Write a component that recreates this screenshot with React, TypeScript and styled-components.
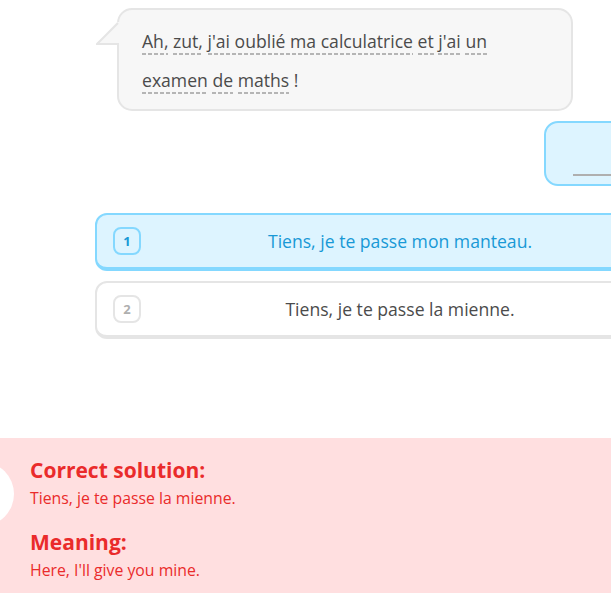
import React from "react";
import styled, { createGlobalStyle } from "styled-components";

const GlobalStyle = createGlobalStyle`
  html, body {
    margin: 0;
    padding: 0;
    background: #ffffff;
    overflow: hidden;
  }
  body {
    font-family: "Open Sans", "Liberation Sans", sans-serif;
  }
`;

type Choice = { id: number; text: string; selected?: boolean };

const prompt: { text: string; hint: boolean }[][] = [
  [
    { text: "Ah,", hint: true },
    { text: "zut,", hint: true },
    { text: "j'ai oublié ma calculatrice", hint: true },
    { text: "et", hint: true },
    { text: "j'ai", hint: true },
    { text: "un", hint: true },
  ],
  [
    { text: "examen", hint: true },
    { text: "de", hint: true },
    { text: "maths", hint: true },
    { text: "!", hint: false },
  ],
];

const choices: Choice[] = [
  { id: 1, text: "Tiens, je te passe mon manteau.", selected: true },
  { id: 2, text: "Tiens, je te passe la mienne." },
];

function App() {
  return (
    <>
      <GlobalStyle />
      <S.Page>
        <S.ChatRow>
          <S.Bubble>
            <S.Tail width="25" height="24" viewBox="0 0 25 24">
              <path d="M25 0 L21 0 L1 21 L25 21 Z" fill="#f7f7f7" />
              <path d="M22 1 L1 22 L23 22" fill="none" stroke="#e5e5e5" strokeWidth="2" />
            </S.Tail>
            <S.Prompt>
              {prompt.map((line, i) => (
                <React.Fragment key={i}>
                  {line.map((w, j) => (
                    <React.Fragment key={j}>
                      {w.hint ? <S.Hint>{w.text}</S.Hint> : w.text}
                      {j < line.length - 1 ? " " : ""}
                    </React.Fragment>
                  ))}
                  {i < prompt.length - 1 && <br />}
                </React.Fragment>
              ))}
            </S.Prompt>
          </S.Bubble>
        </S.ChatRow>

        <S.AnswerRow>
          <S.AnswerBubble>
            <S.Blank />
          </S.AnswerBubble>
        </S.AnswerRow>

        <S.Choices>
          {choices.map((c) => (
            <S.Card key={c.id} data-selected={c.selected ? "true" : "false"}>
              <S.Key>{c.id}</S.Key>
              <S.CardText>{c.text}</S.CardText>
            </S.Card>
          ))}
        </S.Choices>

        <S.Footer>
          <S.Badge />
          <S.Heading>Correct solution:</S.Heading>
          <S.Body>Tiens, je te passe la mienne.</S.Body>
          <S.Heading data-gap="true">Meaning:</S.Heading>
          <S.Body>Here, I'll give you mine.</S.Body>
        </S.Footer>
      </S.Page>
    </>
  );
}

const S = {
  Page: styled.div`
    width: 611px;
    height: 593px;
    overflow: hidden;
    padding-top: 8px;
    box-sizing: border-box;
    display: flex;
    flex-direction: column;
  `,
  ChatRow: styled.div`
    display: flex;
    padding-left: 117px;
  `,
  Bubble: styled.div`
    position: relative;
    width: 456px;
    box-sizing: border-box;
    background: #f7f7f7;
    border: 2px solid #e5e5e5;
    border-radius: 15px;
    padding: 12px 20px 9px 23px;
  `,
  Tail: styled.svg`
    position: absolute;
    left: -23px;
    top: 12px;
    display: block;
  `,
  Prompt: styled.p`
    margin: 0;
    font-size: 17.6px;
    line-height: 39px;
    color: #4b4b4b;
  `,
  Hint: styled.span`
    padding-bottom: 2px;
    background-image: repeating-linear-gradient(
      to right,
      #b5b5b5 0 4px,
      transparent 4px 6px
    );
    background-repeat: no-repeat;
    background-position: left bottom;
    background-size: 100% 2px;
  `,
  AnswerRow: styled.div`
    display: flex;
    margin-top: 10px;
    padding-left: 544px;
  `,
  AnswerBubble: styled.div`
    flex: none;
    width: 140px;
    height: 65px;
    box-sizing: border-box;
    background: #ddf4ff;
    border: 2px solid #84d8ff;
    border-radius: 14px;
    display: flex;
    flex-direction: column;
    justify-content: flex-end;
    padding: 0 0 8px 27px;
  `,
  Blank: styled.div`
    width: 100px;
    height: 2px;
    background: #afafaf;
  `,
  Choices: styled.div`
    display: flex;
    flex-direction: column;
    gap: 10px;
    margin-top: 27px;
    padding-left: 95px;
  `,
  Card: styled.div`
    flex: none;
    width: 610px;
    box-sizing: border-box;
    display: grid;
    grid-template-columns: 28px 1fr 28px;
    align-items: center;
    padding: 12px 16px;
    border: 2px solid #e5e5e5;
    border-bottom-width: 4px;
    border-radius: 12px;
    background: #ffffff;
    color: #4b4b4b;
    &[data-selected="true"] {
      background: #ddf4ff;
      border-color: #84d8ff;
      color: #1899d6;
    }
  `,
  Key: styled.span`
    width: 28px;
    height: 28px;
    box-sizing: border-box;
    display: flex;
    align-items: center;
    justify-content: center;
    border: 2px solid #e5e5e5;
    border-radius: 8px;
    font-size: 13px;
    font-weight: 700;
    color: #afafaf;
    [data-selected="true"] > & {
      border-color: #84d8ff;
      color: #1899d6;
    }
  `,
  CardText: styled.span`
    text-align: center;
    font-size: 17.6px;
    line-height: 24px;
  `,
  Footer: styled.div`
    position: relative;
    flex: none;
    margin-top: 99px;
    height: 160px;
    box-sizing: border-box;
    background: #ffdfe0;
    padding: 18px 30px 0;
    color: #ea2b2b;
  `,
  Badge: styled.div`
    position: absolute;
    left: -50px;
    top: 24px;
    width: 64px;
    height: 64px;
    border-radius: 50%;
    background: #ffffff;
  `,
  Heading: styled.h2`
    margin: 0;
    font-size: 21px;
    line-height: 28px;
    font-weight: 700;
    &[data-gap="true"] {
      margin-top: 18px;
    }
  `,
  Body: styled.p`
    margin: 2px 0 0;
    font-size: 15.8px;
    line-height: 24px;
  `,
};

export default App;
